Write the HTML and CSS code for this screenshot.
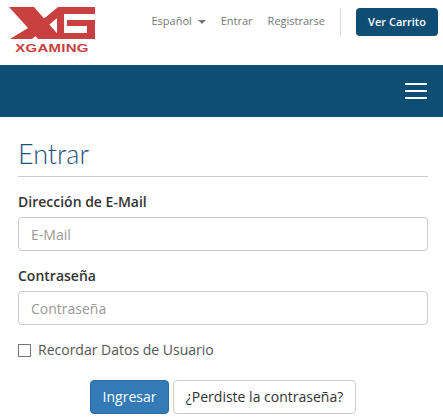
FILE: index.html
```html
<!DOCTYPE html>
<html lang="es">
<head>
  <meta charset="UTF-8">
  <meta name="viewport" content="width=device-width, initial-scale=1.0">
  <title>Entrar</title>
  <link rel="stylesheet" href="styles.css">
</head>
<body>

  <header class="top-bar">
    <a class="logo" href="#">
      <svg class="logo-mark" width="88" height="32" viewBox="0 0 88 32">
        <polygon fill="#c8403f" points="1,0 26,0 54,32 30,32"/>
        <polygon fill="#c8403f" points="50,0 87,0 87,7 54,7 24,32 2,32 38,10"/>
        <polygon fill="#c8403f" points="49,7 56,7 56,32 49,32"/>
        <polygon fill="#c8403f" points="59,13 87,13 87,32 56,32 56,26 79,26 79,19 59,19"/>
      </svg>
      <span class="logo-text">XGAMING</span>
    </a>
    <nav class="top-nav">
      <a href="#">Español <span class="caret"></span></a>
      <a href="#">Entrar</a>
      <a href="#">Registrarse</a>
    </nav>
    <div class="top-divider"></div>
    <a class="btn-cart" href="#">Ver Carrito</a>
  </header>

  <div class="main-bar">
    <button class="burger" type="button" aria-label="Menu"><span></span><span></span><span></span></button>
  </div>

  <main class="content">
    <h1>Entrar</h1>
    <form>
      <div class="form-group">
        <label for="email">Dirección de E-Mail</label>
        <input type="text" id="email" placeholder="E-Mail">
      </div>
      <div class="form-group">
        <label for="password">Contraseña</label>
        <input type="password" id="password" placeholder="Contraseña">
      </div>
      <label class="remember"><input type="checkbox"> Recordar Datos de Usuario</label>
      <div class="form-actions">
        <button class="btn btn-primary" type="button">Ingresar</button>
        <a class="btn btn-default" href="#">¿Perdiste la contraseña?</a>
      </div>
    </form>
  </main>

</body>
</html>
```

FILE: styles.css
```css
* {
  box-sizing: border-box;
}

body {
  margin: 0;
  background-color: #fff;
  color: #333;
  font-family: "Open Sans", sans-serif;
  font-size: 14px;
  overflow: hidden;
}

a {
  text-decoration: none;
}

.top-bar {
  display: flex;
  align-items: flex-start;
  height: 65px;
  padding: 7px 5px 0 8px;
}

.logo {
  display: flex;
  flex-direction: column;
  align-items: center;
  width: 88px;
}

.logo-mark {
  display: block;
}

.logo-text {
  margin-top: 5px;
  color: #c8403f;
  font-family: "Liberation Sans", sans-serif;
  font-size: 11px;
  line-height: 9px;
  font-weight: bold;
  letter-spacing: 0.2px;
  transform: scaleX(1.36);
}

.top-nav {
  display: flex;
  gap: 15px;
  margin-left: auto;
  padding-top: 5px;
}

.top-nav a {
  color: #777;
  font-size: 11px;
  line-height: 18px;
}

.caret {
  display: inline-block;
  margin-left: 3px;
  vertical-align: middle;
  border-top: 4px solid #777;
  border-left: 4px solid transparent;
  border-right: 4px solid transparent;
}

.top-divider {
  width: 1px;
  height: 28px;
  margin: 1px 15px 0;
  background-color: #ddd;
}

.btn-cart {
  width: 82px;
  height: 28px;
  margin-top: 1px;
  border-radius: 4px;
  background-color: #0f4e74;
  color: #fff;
  font-size: 11px;
  line-height: 28px;
  font-weight: 600;
  text-align: center;
}

.main-bar {
  display: flex;
  justify-content: flex-end;
  align-items: center;
  height: 52px;
  padding-right: 16px;
  background-color: #0f4e74;
}

.burger {
  display: flex;
  flex-direction: column;
  gap: 5px;
  padding: 0;
  border: 0;
  background: none;
}

.burger span {
  display: block;
  width: 22px;
  height: 2px;
  background-color: #fff;
}

.content {
  padding: 20px 15px 0 18px;
}

h1 {
  margin: 0 0 15px;
  padding-bottom: 6px;
  border-bottom: 1px solid #ccc;
  color: #1a5580;
  font-family: "Lato", sans-serif;
  font-size: 27px;
  line-height: 33px;
  font-weight: 300;
}

.form-group {
  margin-bottom: 15px;
}

.form-group label {
  display: block;
  margin-bottom: 5px;
  font-size: 14px;
  line-height: 20px;
  font-weight: 600;
}

.form-group input {
  display: block;
  width: 100%;
  height: 34px;
  padding: 6px 12px;
  border: 1px solid #ccc;
  border-radius: 4px;
  font-family: inherit;
  font-size: 14px;
  color: #555;
}

.form-group input::placeholder {
  color: #999;
}

.remember {
  display: flex;
  align-items: center;
  gap: 7px;
  font-size: 14px;
  line-height: 20px;
  color: #555;
}

.remember input {
  appearance: none;
  width: 13px;
  height: 13px;
  margin: 0;
  border: 1px solid #767676;
  background-color: #fff;
}

.form-actions {
  display: flex;
  justify-content: center;
  gap: 4px;
  margin-top: 20px;
}

.btn {
  padding: 6px 0;
  border: 1px solid transparent;
  border-radius: 4px;
  font-family: inherit;
  font-size: 14px;
  line-height: 20px;
  text-align: center;
}

.btn-primary {
  width: 79px;
  background-color: #337ab7;
  border-color: #2e6da4;
  color: #fff;
}

.btn-default {
  width: 183px;
  background-color: #fff;
  border-color: #ccc;
  color: #333;
}
```
